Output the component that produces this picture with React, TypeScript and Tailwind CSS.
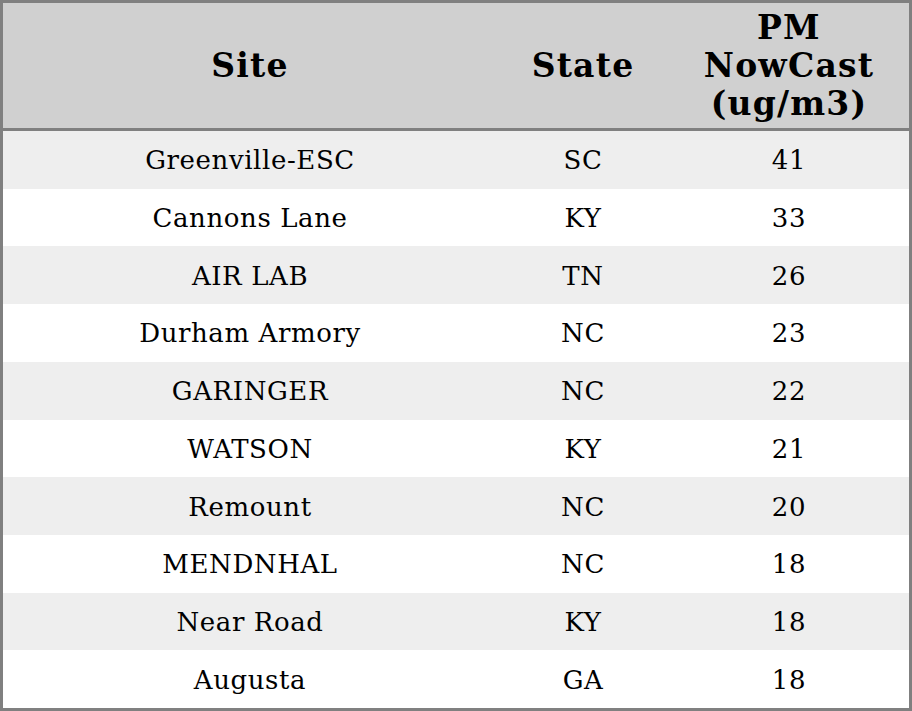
const rows = [
    { site: 'Greenville-ESC', state: 'SC', pm: 41 },
    { site: 'Cannons Lane', state: 'KY', pm: 33 },
    { site: 'AIR LAB', state: 'TN', pm: 26 },
    { site: 'Durham Armory', state: 'NC', pm: 23 },
    { site: 'GARINGER', state: 'NC', pm: 22 },
    { site: 'WATSON', state: 'KY', pm: 21 },
    { site: 'Remount', state: 'NC', pm: 20 },
    { site: 'MENDNHAL', state: 'NC', pm: 18 },
    { site: 'Near Road', state: 'KY', pm: 18 },
    { site: 'Augusta', state: 'GA', pm: 18 },
]

export default function App() {
    return (
        <div className="w-[912px] h-[711px] bg-white font-['DejaVu_Serif',serif] text-black">
            <div className="flex h-full flex-col border-[3px] border-[#808080]">
                {/* Header */}
                <div className="grid h-[128px] shrink-0 grid-cols-[494px_172px_240px] border-b-[3px] border-[#808080] bg-[#d0d0d0] text-[33px] font-bold leading-[38px] tracking-[1.2px]">
                    <div className="flex items-center justify-center text-center">Site</div>
                    <div className="flex items-center justify-center text-center">State</div>
                    <div className="flex items-center justify-center text-center">
                        PM<br />NowCast<br />(ug/m3)
                    </div>
                </div>

                {/* Body */}
                <div className="flex flex-1 flex-col">
                    {rows.map((r, i) => (
                        <div
                            key={r.site}
                            className={`grid flex-1 grid-cols-[494px_172px_240px] items-center pt-[2px] text-[26px] tracking-[0.6px] ${i % 2 === 0 ? 'bg-[#eeeeee]' : 'bg-white'}`}
                        >
                            <div className="text-center">{r.site}</div>
                            <div className="text-center">{r.state}</div>
                            <div className="text-center">{r.pm}</div>
                        </div>
                    ))}
                </div>
            </div>
        </div>
    )
}
